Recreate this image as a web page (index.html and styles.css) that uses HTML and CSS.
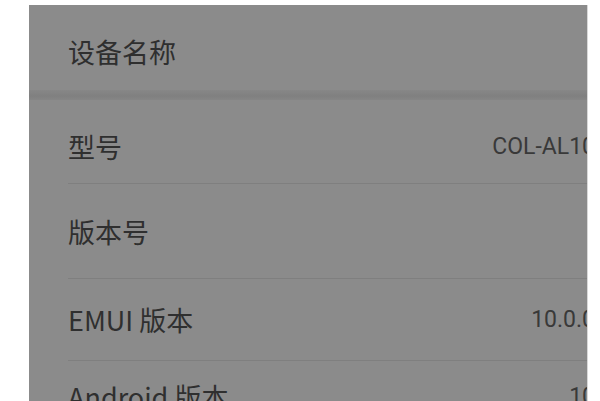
FILE: index.html
```html
<!DOCTYPE html>
<html lang="zh-CN">
<head>
<meta charset="utf-8">
<title>关于手机</title>
<link rel="stylesheet" href="styles.css">
</head>
<body>
<div class="panel">
  <div class="screen">
    <div class="row row-name">
      <span class="label">设备名称</span>
      <span class="value"></span>
    </div>
    <div class="band"></div>
    <div class="row row-model">
      <span class="label">型号</span>
      <span class="value">COL-AL10</span>
    </div>
    <div class="row row-build">
      <span class="label">版本号</span>
      <span class="value"></span>
    </div>
    <div class="row row-emui">
      <span class="label">EMUI 版本</span>
      <span class="value">10.0.0</span>
    </div>
    <div class="row row-android">
      <span class="label">Android 版本</span>
      <span class="value">10</span>
    </div>
  </div>
</div>
</body>
</html>
```

FILE: styles.css
```css
html, body {
  margin: 0;
  padding: 0;
  background: #ffffff;
}

body {
  width: 600px;
  height: 401px;
  overflow: hidden;
  padding-top: 5px;
  box-sizing: border-box;
}

.panel {
  margin-left: 29px;
  width: 558px;
  height: 396px;
  background: #8b8b8b;
  overflow: hidden;
  box-shadow: 1px 0 0 #d8d8d8;
}

.screen {
  width: 640px;
  display: flex;
  flex-direction: column;
}

.row {
  display: flex;
  align-items: flex-start;
  justify-content: space-between;
  margin-left: 39px;
  padding-right: 74px;
  box-sizing: border-box;
  border-bottom: 1px solid #7f7f7f;
}

.label {
  font-family: "Noto Sans CJK SC", "Noto Sans", sans-serif;
  font-size: 27px;
  line-height: 30px;
  color: #2f2f2f;
  white-space: nowrap;
}

.value {
  font-family: Roboto, "Noto Sans", sans-serif;
  font-size: 23px;
  line-height: 30px;
  color: #393939;
  white-space: nowrap;
}

.row-name {
  height: 85px;
  padding-top: 32px;
  border-bottom: none;
}

.band {
  height: 10px;
  background: linear-gradient(#878787, #808080 60%, #868686);
}

.row-model {
  height: 84px;
  padding-top: 32px;
}

.row-build {
  height: 95px;
  padding-top: 33px;
}

.row-emui {
  height: 82px;
  padding-top: 26px;
}

.row-android {
  height: 86px;
  padding-top: 21px;
  border-bottom: none;
}
```
